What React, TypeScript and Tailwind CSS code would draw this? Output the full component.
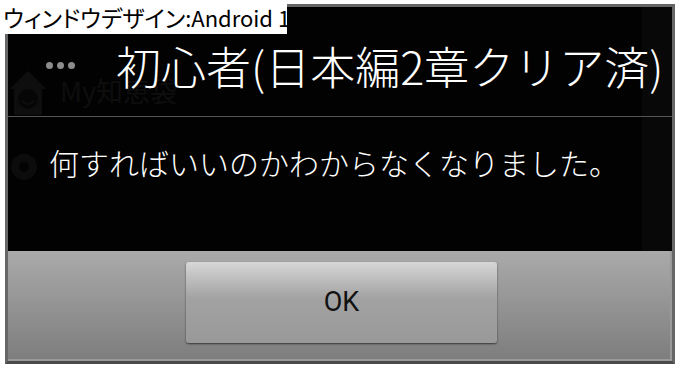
import React from "react";

const jp = { fontFamily: '"Noto Sans CJK JP", "Noto Sans", sans-serif' };

export default function App() {
  return (
    <div className="relative w-[680px] h-[368px] bg-white overflow-hidden" style={jp}>
      <div className="pt-[4px] pl-[5px]">
        <div className="w-[670px] h-[360px] border-[3px] border-[#666666] border-b-[#4a4a4a] flex flex-col bg-black">
          {/* black content */}
          <div className="relative h-[244px] bg-[#020202] flex flex-col">
            {/* faint ghost background */}
            <div className="absolute inset-0 pointer-events-none">
              <svg className="absolute left-[0px] top-[56px]" width="40" height="56" viewBox="0 0 40 56">
                <path d="M2 26 L20 8 L38 26 L34 26 L34 52 L6 52 L6 26 Z" fill="#0e0e0e" />
                <circle cx="20" cy="36" r="10" fill="#060606" />
                <path d="M14 38 Q20 44 26 38" stroke="#0e0e0e" strokeWidth="2" fill="none" />
              </svg>
              <div className="absolute left-[52px] top-[70px] text-[27px] leading-none text-[#0e0e0e]">My知恵袋</div>
              <svg className="absolute left-[0px] top-[140px]" width="32" height="40" viewBox="0 0 32 40">
                <circle cx="16" cy="20" r="13" fill="#0c0c0c" />
                <circle cx="16" cy="20" r="5" fill="#030303" />
              </svg>
              <div className="absolute right-0 top-0 w-[30px] h-full bg-[#080808]" />
            </div>

            <div className="relative h-[109px] flex items-start">
              <div className="flex gap-[4px] pl-[38px] pt-[55px]">
                <div className="w-[7px] h-[7px] rounded-full bg-[#8c8c8c]" />
                <div className="w-[7px] h-[7px] rounded-full bg-[#8c8c8c]" />
                <div className="w-[7px] h-[7px] rounded-full bg-[#8c8c8c]" />
              </div>
              <div className="pl-[41px] pt-[36px] text-[45px] font-light leading-none text-white whitespace-nowrap">
                初心者(日本編2章クリア済)
              </div>
            </div>
            <div className="relative h-[1px] bg-[#555555]" />
            <div className="relative pl-[41px] pt-[30px] text-[30px] font-light leading-none text-white whitespace-nowrap">
              何すればいいのかわからなくなりました。
            </div>
          </div>
          {/* button bar */}
          <div className="flex-1 bg-gradient-to-b from-[#aaaaaa] to-[#7e7e7e] border-b-2 border-r-2 border-[#9a9a9a] pt-[11px] pl-[178px]">
            <div className="w-[311px] h-[81px] rounded-[3px] bg-gradient-to-b from-[#d7d7d7] via-[#a2a2a2] via-45% to-[#999999] shadow-[0_1px_2px_rgba(0,0,0,0.6)] flex items-center justify-center">
              <span className="text-[27px] leading-none text-[#111111]" style={{ fontFamily: 'Roboto, "Noto Sans", sans-serif' }}>OK</span>
            </div>
          </div>
        </div>
      </div>
      {/* label overlay */}
      <div className="absolute left-0 top-0 w-[287px] h-[34px] bg-white flex items-center pl-[3px]">
        <span className="leading-none text-black whitespace-nowrap" style={{ fontFeatureSettings: '"palt"' }}>
          <span className="text-[23px]">ウィンドウデザイン</span>
          <span className="text-[22px]">:Android 1</span>
        </span>
      </div>
    </div>
  );
}
